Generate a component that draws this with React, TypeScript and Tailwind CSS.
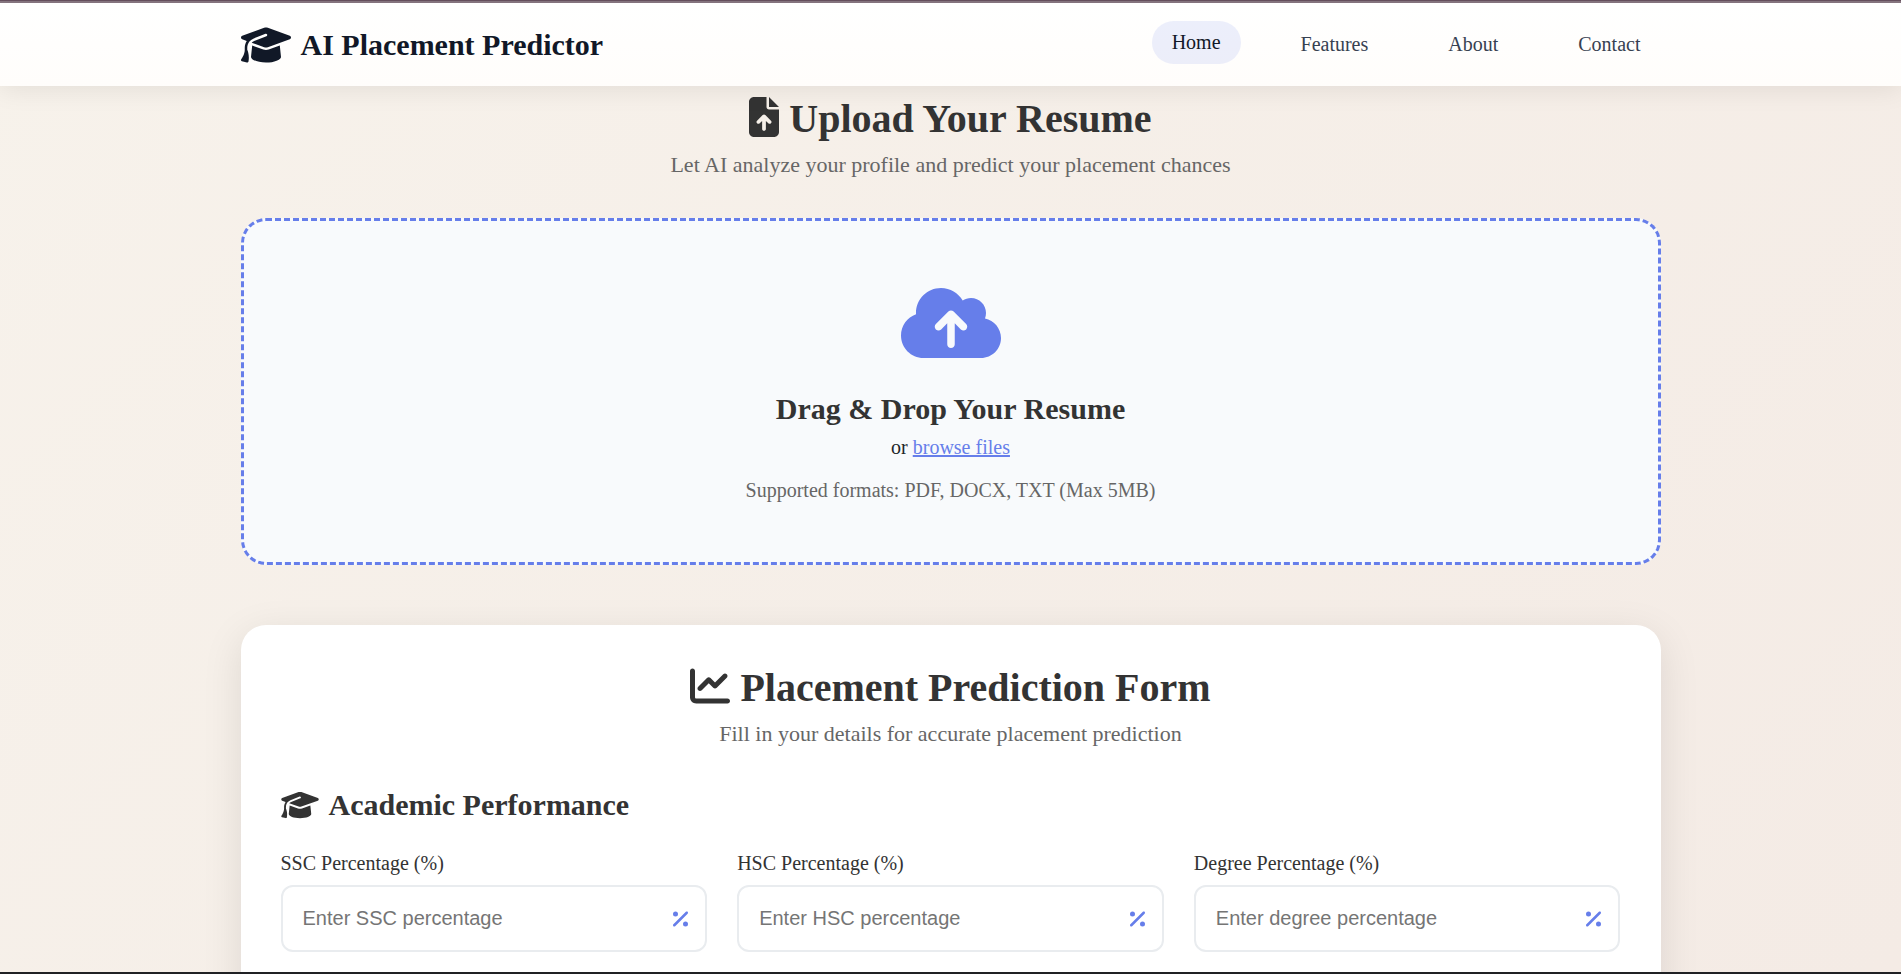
import { FaChartLine, FaCloudArrowUp, FaFileArrowUp, FaGraduationCap, FaPercent } from "react-icons/fa6";
import type { ReactNode } from "react";

const links = ["Features", "About", "Contact"];

const fields = [
  { id: "ssc", label: "SSC Percentage (%)", placeholder: "Enter SSC percentage" },
  { id: "hsc", label: "HSC Percentage (%)", placeholder: "Enter HSC percentage" },
  { id: "degree", label: "Degree Percentage (%)", placeholder: "Enter degree percentage" },
];

function Header() {
  return (
    <header className="z-10 shrink-0 bg-linear-to-b from-white to-[#fffdfb] py-5 shadow-[0_4px_24px_rgba(0,0,0,0.08)]">
      <div className="mx-auto flex h-[43px] w-full max-w-[1420px] items-center justify-between">
        <a href="#home" className="flex items-center gap-2.5 text-[30px] font-bold text-[#111827]">
          <FaGraduationCap className="h-10 w-[50px]" aria-hidden="true" />
          AI Placement Predictor
        </a>
        <nav className="flex gap-10 text-xl leading-[23px]">
          <a href="#home" className="-translate-y-0.5 rounded-[25px] bg-[#667eea]/12 px-5 py-2.5 text-[#111827]">
            Home
          </a>
          {links.map((link) => (
            <a key={link} href={`#${link.toLowerCase()}`} className="px-5 py-2.5 text-[#374151]">
              {link}
            </a>
          ))}
        </nav>
      </div>
    </header>
  );
}

function SectionTitle({ icon, title, subtitle }: { icon: ReactNode; title: string; subtitle: string }) {
  return (
    <div className="text-center">
      <h2 className="flex items-center justify-center gap-2.5 text-[40px] leading-[46px] font-bold text-[#333]">
        <span className="pb-1">{icon}</span>
        {title}
      </h2>
      <p className="mt-2.5 text-[22px] leading-[26px] text-[#666]">{subtitle}</p>
    </div>
  );
}

function UploadArea() {
  return (
    <div className="mt-10 flex flex-col items-center rounded-[25px] border-3 border-dashed border-[#667eea] bg-[#f8fafc] px-10 pt-[62px] pb-[60px] text-xl leading-[23px]">
      <FaCloudArrowUp className="h-20 w-[100px] text-[#667eea]" aria-hidden="true" />
      <h3 className="mt-7 text-[30px] leading-[35px] font-bold text-[#333]">Drag &amp; Drop Your Resume</h3>
      <p className="mt-2.5 text-[#212529]">
        or{" "}
        <label htmlFor="resume" className="cursor-pointer text-[#667eea] underline">
          browse files
        </label>
      </p>
      <input id="resume" type="file" accept=".pdf,.docx,.txt" className="hidden" />
      <p className="mt-5 text-[#666]">Supported formats: PDF, DOCX, TXT (Max 5MB)</p>
    </div>
  );
}

function PredictionForm() {
  return (
    <form className="mt-[60px] rounded-[25px] bg-white p-10 shadow-[0_10px_40px_rgba(0,0,0,0.1)]">
      <SectionTitle
        icon={<FaChartLine className="size-10" aria-hidden="true" />}
        title="Placement Prediction Form"
        subtitle="Fill in your details for accurate placement prediction"
      />
      <h3 className="mt-10 flex items-center gap-2.5 text-[30px] leading-[35px] font-bold text-[#333]">
        <FaGraduationCap className="h-[30px] w-[38px]" aria-hidden="true" />
        Academic Performance
      </h3>
      <div className="mt-[30px] grid grid-cols-3 gap-[30px]">
        {fields.map(({ id, label, placeholder }) => (
          <div key={id}>
            <label htmlFor={id} className="block text-xl leading-[23px] text-[#333]">
              {label}
            </label>
            <div className="relative mt-2.5">
              <input
                id={id}
                type="text"
                placeholder={placeholder}
                className="block h-[67px] w-full rounded-xl border-2 border-[#e9ecef] bg-white py-5 pr-[50px] pl-5 font-['Liberation_Sans',Arial,sans-serif] text-xl text-[#333] placeholder:text-[#757575]"
              />
              <FaPercent className="absolute top-1/2 right-[19px] h-5 w-[15px] -translate-y-1/2 text-[#667eea]" aria-hidden="true" />
            </div>
          </div>
        ))}
      </div>
      <div className="h-10" />
    </form>
  );
}

export default function App() {
  return (
    <div className="flex h-screen flex-col overflow-hidden border-b-2 border-[#202124] bg-linear-135 from-[#f7f2eb] to-[#f4ebe5] font-['Liberation_Serif','Times_New_Roman',serif]">
      <div className="h-[3px] shrink-0 border-t border-[#67505f] bg-[#887782]" />
      <Header />
      <main className="min-h-0 flex-1 overflow-hidden">
        <div className="mx-auto max-w-[1420px] pt-2.5">
          <SectionTitle
            icon={<FaFileArrowUp className="h-10 w-[30px]" aria-hidden="true" />}
            title="Upload Your Resume"
            subtitle="Let AI analyze your profile and predict your placement chances"
          />
          <UploadArea />
          <PredictionForm />
        </div>
      </main>
    </div>
  );
}
